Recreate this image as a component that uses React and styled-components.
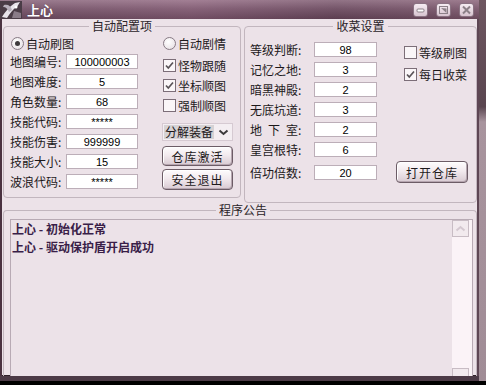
import React from "react";
import styled, { createGlobalStyle } from "styled-components";

const GlobalStyle = createGlobalStyle`
  html, body { margin: 0; padding: 0; background: #000; }
  body {
    width: 486px; height: 385px; overflow: hidden;
    font-family: "Noto Sans CJK SC", "Noto Sans", sans-serif;
    font-size: 12px; color: #1e1a1c;
  }
  * { box-sizing: border-box; }
`;

const leftFields = [
  ["地图编号:", "100000003"],
  ["地图难度:", "5"],
  ["角色数量:", "68"],
  ["技能代码:", "*****"],
  ["技能伤害:", "999999"],
  ["技能大小:", "15"],
  ["波浪代码:", "*****"],
];

const rightFields = [
  ["等级判断:", "98"],
  ["记忆之地:", "3"],
  ["暗黑神殿:", "2"],
  ["无底坑道:", "3"],
  ["地\u2002下\u2002室:", "2"],
  ["皇宫根特:", "6"],
  ["倍功倍数:", "20"],
];

const notices = ["上心 - 初始化正常", "上心 - 驱动保护盾开启成功"];

const Radio = ({ checked, children }) => (
  <OptionRow>
    <RadioDot $checked={checked} />
    <span>{children}</span>
  </OptionRow>
);

const Check = ({ checked, children, indent }) => (
  <OptionRow $indent={indent}>
    <CheckBox>
      {checked && (
        <svg width="11" height="11" viewBox="0 0 11 11">
          <path d="M2 5.5 L4.3 8 L9 2.5" fill="none" stroke="#5a5458" strokeWidth="1.7" />
        </svg>
      )}
    </CheckBox>
    <span>{children}</span>
  </OptionRow>
);

const AppIcon = () => (
  <svg width="22" height="18" viewBox="0 0 22 18">
    <rect width="22" height="18" fill="#4a3c46" />
    <path d="M2 16 C6 10 9 6 15 2 L20 1 L17 6 C13 8 10 12 7 17 Z" fill="#e8e4ea" />
    <path d="M4 4 C8 3 11 5 12 9 L9 11 C8 8 6 6 3 6 Z" fill="#b8b0bc" />
    <path d="M14 10 L21 12 L21 17 L12 17 Z" fill="#8a7c88" />
    <circle cx="16" cy="6" r="1.5" fill="#fff" />
  </svg>
);

const WinButton = ({ kind }) => (
  <CapButton>
    <svg width="13" height="12" viewBox="0 0 13 12">
      {kind === "min" && <rect x="3" y="5" width="7" height="3" rx="1" fill="#fff" stroke="#8c8088" />}
      {kind === "max" && (
        <g>
          <rect x="2.5" y="2.5" width="8" height="7" fill="none" stroke="#8c8088" />
          <path d="M4 4 L9.5 9 L9.5 4.5 Z" fill="#8c8088" />
        </g>
      )}
      {kind === "close" && (
        <path d="M3 2.5 L10 9.5 M10 2.5 L3 9.5" stroke="#8c8088" strokeWidth="2" />
      )}
    </svg>
  </CapButton>
);

const App = () => {
  return (
    <>
      <GlobalStyle />
      <Screen>
        <Window>
          <TitleBar>
            <AppIcon />
            <Title>上心</Title>
            <Caps>
              <WinButton kind="min" />
              <WinButton kind="max" />
              <WinButton kind="close" />
            </Caps>
          </TitleBar>
          <Body>
            <TopRow>
              <Group $w={238} $h={180}>
                <Legend>自动配置项</Legend>
                <LeftInner>
                  <Column>
                    <Radio checked>自动刷图</Radio>
                    <FieldList>
                      {leftFields.map(([label, value]) => (
                        <FieldRow key={label} $cols="56px 72px">
                          <Label>{label}</Label>
                          <Field value={value} readOnly />
                        </FieldRow>
                      ))}
                    </FieldList>
                  </Column>
                  <SideColumn>
                    <Radio>自动剧情</Radio>
                    <ChecksList>
                      <Check checked>怪物跟随</Check>
                      <Check checked>坐标顺图</Check>
                      <Check>强制顺图</Check>
                    </ChecksList>
                    <Select>
                      <SelectText>分解装备</SelectText>
                      <svg width="11" height="7" viewBox="0 0 11 7">
                        <path d="M1.5 1.5 L5.5 5 L9.5 1.5" fill="none" stroke="#3c3a3c" strokeWidth="2" />
                      </svg>
                    </Select>
                    <Button $top={5}>仓库激活</Button>
                    <Button $top={3} $h={21}>安全退出</Button>
                  </SideColumn>
                </LeftInner>
              </Group>

              <Group $w={233} $h={185}>
                <Legend>收菜设置</Legend>
                <RightInner>
                  <FieldList>
                    {rightFields.map(([label, value], i) => (
                      <FieldRow key={label} $cols="64px 63px" $extra={i === 6 ? 3 : 0}>
                        <Label>{label}</Label>
                        <Field value={value} readOnly />
                      </FieldRow>
                    ))}
                  </FieldList>
                  <HarvestSide>
                    <Check indent={8}>等级刷图</Check>
                    <Spacer $h={7} />
                    <Check checked indent={8}>每日收菜</Check>
                    <Button $top={79} $w={72} $h={22}>打开仓库</Button>
                  </HarvestSide>
                </RightInner>
              </Group>
            </TopRow>

            <NoticeGroup>
              <Legend>程序公告</Legend>
              <ListBox>
                <Lines>
                  {notices.map((n) => (
                    <Line key={n}>{n}</Line>
                  ))}
                </Lines>
                <ScrollTrack>
                  <ScrollBtn>
                    <svg width="11" height="7" viewBox="0 0 11 7">
                      <path d="M1.5 5.5 L5.5 2 L9.5 5.5" fill="none" stroke="#d4c8d0" strokeWidth="2" />
                    </svg>
                  </ScrollBtn>
                  <ScrollBtn $cut />
                </ScrollTrack>
              </ListBox>
            </NoticeGroup>
          </Body>
        </Window>
        <Desktop />
      </Screen>
    </>
  );
};

const Screen = styled.div`
  display: flex;
  height: 381px;
  width: 486px;
`;

const Window = styled.div`
  width: 479px;
  height: 381px;
  display: flex;
  flex-direction: column;
  background: #ece2e8;
  border-bottom: 5px solid #4c3a46;
  box-shadow: 0 -1px 0 #2e2028 inset;
`;

const Desktop = styled.div`
  flex: 1;
  background: linear-gradient(180deg, #6e5660 0%, #5a4650 28%, #a8949e 32%, #a08c96 100%);
`;

const TitleBar = styled.div`
  height: 19px;
  flex-shrink: 0;
  display: flex;
  align-items: center;
  background:
    linear-gradient(90deg, rgba(120, 90, 110, 0.2), rgba(170, 120, 150, 0.25) 40%, rgba(90, 60, 80, 0.2) 70%, rgba(150, 110, 130, 0.25)),
    linear-gradient(180deg, #a08294 0%, #7c5c70 45%, #5c3e50 100%);
`;

const Title = styled.span`
  margin-left: 5px;
  color: #fff;
  font-weight: bold;
  font-size: 13px;
  line-height: 19px;
  text-shadow: 0 0 1px #4a2a3c;
`;

const Caps = styled.div`
  margin-left: auto;
  margin-right: 5px;
  display: flex;
  gap: 8px;
`;

const CapButton = styled.div`
  width: 15px;
  height: 14px;
  border: 1px solid #8a7282;
  border-radius: 3px;
  display: flex;
  align-items: center;
  justify-content: center;
  background: linear-gradient(180deg, #f6ecf2, #d8c4d0);
`;

const Body = styled.div`
  flex: 1;
  border-left: 2px solid #4a3240;
  border-right: 2px solid #5e4654;
  padding-left: 1px;
`;

const TopRow = styled.div`
  display: flex;
  gap: 3px;
  align-items: flex-start;
  margin-top: -1px;
`;

const Group = styled.fieldset`
  margin: 0;
  padding: 0;
  min-width: 0;
  width: ${(p) => p.$w}px;
  height: ${(p) => p.$h}px;
  border: 1px solid #c2b6be;
  border-radius: 4px;
`;

const Legend = styled.legend`
  margin: 0 auto;
  padding: 0 3px;
  font-size: 12px;
  line-height: 16px;
  color: #2a2428;
`;

const LeftInner = styled.div`
  display: grid;
  grid-template-columns: 128px 71px;
  column-gap: 24px;
  padding: 2px 0 0 6px;
`;

const Column = styled.div`
  display: flex;
  flex-direction: column;
  gap: 3px;
`;

const SideColumn = styled.div`
  display: flex;
  flex-direction: column;
`;

const FieldList = styled.div`
  display: flex;
  flex-direction: column;
  gap: 5px;
`;

const FieldRow = styled.div`
  display: grid;
  grid-template-columns: ${(p) => p.$cols};
  align-items: center;
  height: 15px;
  margin-top: ${(p) => p.$extra || 0}px;
`;

const Label = styled.span`
  font-size: 12px;
  line-height: 15px;
  white-space: nowrap;
  color: #1c181a;
`;

const Field = styled.input`
  width: 100%;
  height: 15px;
  padding: 0;
  border: 1px solid #bcaeb8;
  background: #fff;
  text-align: center;
  font: 11px "Liberation Sans", Arial, sans-serif;
  color: #000;
  outline: none;
`;

const OptionRow = styled.div`
  display: flex;
  align-items: center;
  gap: 2px;
  height: 15px;
  margin-left: ${(p) => (p.$indent !== undefined ? p.$indent : 1)}px;
  font-size: 12px;
  line-height: 15px;
  white-space: nowrap;
`;

const RadioDot = styled.span`
  position: relative;
  width: 13px;
  height: 13px;
  border-radius: 50%;
  border: 1px solid #877a84;
  background: radial-gradient(circle at 40% 35%, #ffffff, #e4dce0);
  &::after {
    content: "";
    display: ${(p) => (p.$checked ? "block" : "none")};
    position: absolute;
    left: 3px;
    top: 3px;
    width: 5px;
    height: 5px;
    border-radius: 50%;
    background: #3e3a3c;
  }
`;

const CheckBox = styled.span`
  width: 13px;
  height: 13px;
  border: 1px solid #7c6e78;
  background: #faf6f8;
  display: flex;
  align-items: center;
  justify-content: center;
`;

const ChecksList = styled.div`
  display: flex;
  flex-direction: column;
  gap: 5px;
  margin-top: 7px;
`;

const Select = styled.div`
  margin-top: 10px;
  height: 18px;
  border: 1px solid #d6cad2;
  background: #f4eef2;
  display: flex;
  align-items: center;
  justify-content: space-between;
  padding: 0 3px 0 1px;
`;

const SelectText = styled.span`
  background: #d6d2d4;
  padding: 0 1px;
  line-height: 14px;
  font-size: 12px;
  color: #1c181a;
`;

const Button = styled.button`
  margin-top: ${(p) => p.$top || 0}px;
  width: ${(p) => (p.$w ? `${p.$w}px` : "100%")};
  height: ${(p) => p.$h || 20}px;
  padding: 0;
  border: 1px solid #6c5c66;
  border-radius: 4px;
  background: linear-gradient(180deg, #fefcfd 0%, #f2eaee 45%, #d8cad2 100%);
  box-shadow: inset -1px -1px 0 #b6a6b0, inset 1px 1px 0 #ffffff;
  font-family: "Noto Sans CJK SC", sans-serif;
  font-size: 12px;
  color: #1e1a1c;
  letter-spacing: 1px;
`;

const RightInner = styled.div`
  display: grid;
  grid-template-columns: 127px 1fr;
  column-gap: 19px;
  padding: 8px 0 0 5px;
`;

const HarvestSide = styled.div`
  display: flex;
  flex-direction: column;
  padding-top: 3px;
`;

const Spacer = styled.div`
  height: ${(p) => p.$h}px;
`;

const NoticeGroup = styled.fieldset`
  margin: -1px 0 0;
  padding: 1px 0 0 6px;
  min-width: 0;
  width: 474px;
  height: 174px;
  border: 1px solid #c2b6be;
  border-bottom: none;
  border-radius: 4px 4px 0 0;
`;

const ListBox = styled.div`
  width: 463px;
  height: 157px;
  display: flex;
  border: 1px solid #b8aab4;
  border-bottom: none;
  background: #ece2e8;
`;

const Lines = styled.div`
  flex: 1;
  padding-left: 1px;
`;

const Line = styled.div`
  font-weight: bold;
  font-size: 12px;
  line-height: 18px;
  color: #3a1e48;
`;

const ScrollTrack = styled.div`
  width: 20px;
  background: #fbf3f7;
  display: flex;
  flex-direction: column;
  justify-content: space-between;
  padding: 0 3px 0 0;
`;

const ScrollBtn = styled.div`
  width: 17px;
  height: ${(p) => (p.$cut ? 8 : 17)}px;
  border: 1px solid #c8bcc4;
  border-bottom: ${(p) => (p.$cut ? "none" : "1px solid #c8bcc4")};
  background: #f2eaee;
  display: flex;
  align-items: center;
  justify-content: center;
`;

export default App;
